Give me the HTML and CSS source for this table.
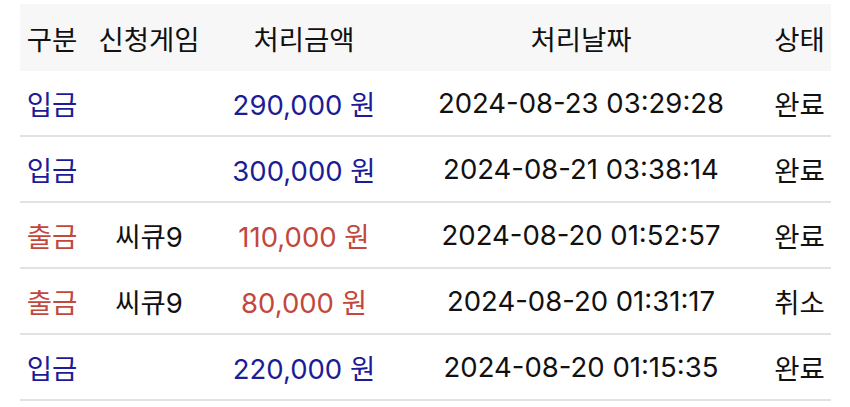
FILE: index.html
```html
<!DOCTYPE html>
<html lang="ko">
<head>
  <meta charset="UTF-8">
  <title>입출금 내역</title>
  <link rel="stylesheet" href="styles.css">
</head>
<body>
  <table class="history">
    <colgroup>
      <col class="c-type">
      <col class="c-game">
      <col class="c-amount">
      <col class="c-date">
      <col class="c-state">
    </colgroup>
    <thead>
      <tr>
        <th>구분</th>
        <th>신청게임</th>
        <th>처리금액</th>
        <th>처리날짜</th>
        <th>상태</th>
      </tr>
    </thead>
    <tbody>
      <tr class="deposit">
        <td class="kind">입금</td>
        <td></td>
        <td class="amount">290,000 원</td>
        <td>2024-08-23 03:29:28</td>
        <td>완료</td>
      </tr>
      <tr class="deposit">
        <td class="kind">입금</td>
        <td></td>
        <td class="amount">300,000 원</td>
        <td>2024-08-21 03:38:14</td>
        <td>완료</td>
      </tr>
      <tr class="withdraw">
        <td class="kind">출금</td>
        <td>씨큐9</td>
        <td class="amount">110,000 원</td>
        <td>2024-08-20 01:52:57</td>
        <td>완료</td>
      </tr>
      <tr class="withdraw">
        <td class="kind">출금</td>
        <td>씨큐9</td>
        <td class="amount">80,000 원</td>
        <td>2024-08-20 01:31:17</td>
        <td>취소</td>
      </tr>
      <tr class="deposit">
        <td class="kind">입금</td>
        <td></td>
        <td class="amount">220,000 원</td>
        <td>2024-08-20 01:15:35</td>
        <td>완료</td>
      </tr>
    </tbody>
  </table>
</body>
</html>
```

FILE: styles.css
```css
body {
  margin: 0;
  padding: 4px 19px 0 20px;
  background: #fff;
  font-family: Inter, "Noto Sans CJK KR", sans-serif;
  color: #111;
}

.history {
  width: 811px;
  border-collapse: collapse;
  table-layout: fixed;
  font-size: 27.5px;
}

.c-type { width: 64px; }
.c-game { width: 130px; }
.c-amount { width: 180px; }
.c-date { width: 374px; }
.c-state { width: 63px; }

.history th {
  height: 67px;
  padding: 0;
  background: #f7f7f7;
  font-weight: normal;
  text-align: center;
}

.history td {
  height: 64px;
  padding: 0;
  text-align: center;
  white-space: nowrap;
  border-bottom: 2px solid #e2e2e2;
}

.deposit .kind,
.deposit .amount {
  color: #1c1c96;
}

.withdraw .kind,
.withdraw .amount {
  color: #c2473d;
}
```
